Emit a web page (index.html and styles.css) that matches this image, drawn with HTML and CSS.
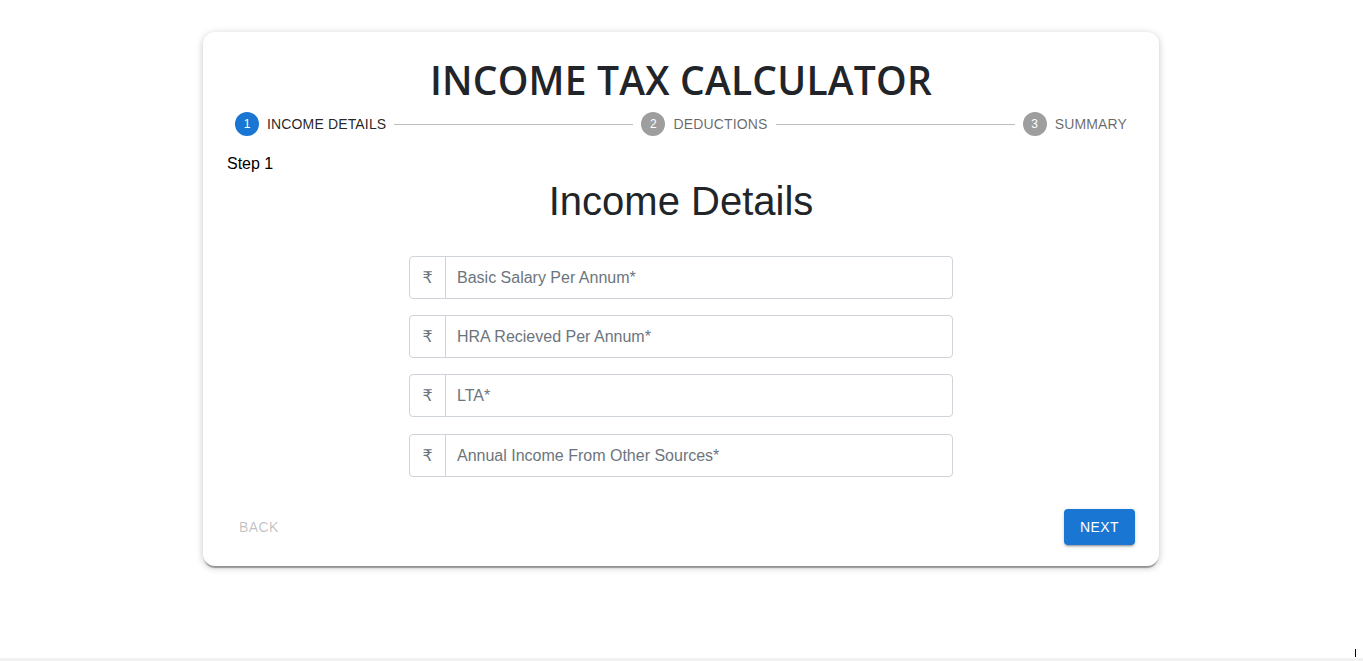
FILE: index.html
```html
<!DOCTYPE html>
<html lang="en">
<head>
    <meta charset="UTF-8">
    <title>Income Tax Calculator</title>
    <link rel="stylesheet" href="styles.css">
</head>
<body>
    <div class="card">
        <h1 class="app-title">INCOME TAX CALCULATOR</h1>

        <div class="stepper">
            <div class="step active">
                <span class="step-icon">1</span>
                <span class="step-label">Income Details</span>
            </div>
            <div class="connector"></div>
            <div class="step">
                <span class="step-icon">2</span>
                <span class="step-label">Deductions</span>
            </div>
            <div class="connector"></div>
            <div class="step">
                <span class="step-icon">3</span>
                <span class="step-label">Summary</span>
            </div>
        </div>

        <div class="step-caption">Step 1</div>
        <h2 class="section-title">Income Details</h2>

        <form class="income-form">
            <div class="input-group">
                <span class="input-prefix">₹</span>
                <input type="text" placeholder="Basic Salary Per Annum*">
            </div>
            <div class="input-group">
                <span class="input-prefix">₹</span>
                <input type="text" placeholder="HRA Recieved Per Annum*">
            </div>
            <div class="input-group">
                <span class="input-prefix">₹</span>
                <input type="text" placeholder="LTA*">
            </div>
            <div class="input-group">
                <span class="input-prefix">₹</span>
                <input type="text" placeholder="Annual Income From Other Sources*">
            </div>
        </form>

        <div class="actions">
            <button class="btn btn-text" disabled>Back</button>
            <button class="btn btn-primary">Next</button>
        </div>
    </div>

    <div class="page-bottom"><span class="caret"></span></div>
</body>
</html>
```

FILE: styles.css
```css
body { margin: 0; font-family: "Liberation Sans", Arial, sans-serif; color: #212529; background: #fff; height: 661px; position: relative; overflow: hidden; }

.card { width: 956px; margin: 32px 0 0 203px; background: #fff; border-radius: 12px; box-sizing: border-box; padding: 22px 24px 21px;
    box-shadow: 0 3px 1px -1px rgba(0,0,0,0.32), 0 2px 6px 0 rgba(0,0,0,0.14), 0 1px 10px 0 rgba(0,0,0,0.1); }

.app-title { margin: 0; text-align: center; font-family: "Open Sans", sans-serif; font-weight: 600; font-size: 39px; line-height: 52px; color: #212529; letter-spacing: 0.2px; }

.stepper { display: flex; align-items: center; padding: 0 8px; margin-top: 6px; height: 24px; }
.step { display: flex; align-items: center; }
.step-icon { width: 24px; height: 24px; border-radius: 50%; background: #9e9e9e; color: #fff; font-size: 12px; display: flex; align-items: center; justify-content: center; }
.step.active .step-icon { background: #1976d2; }
.step-label { margin-left: 8px; font-size: 14px; letter-spacing: 0.15px; text-transform: uppercase; color: rgba(0,0,0,0.6); }
.step.active .step-label { color: rgba(0,0,0,0.87); }
.connector { flex: 1; height: 1px; background: #bdbdbd; margin: 0 8px; }

.step-caption { margin-top: 18px; font-size: 16px; line-height: 20px; color: #000; }
.section-title { margin: 3px 0 0; text-align: center; font-weight: 400; font-size: 40px; line-height: 48px; color: #212529; }

.income-form { width: 544px; margin: 31px auto 0; }
.input-group { display: flex; height: 43px; border: 1px solid #ced4da; border-radius: 4px; box-sizing: border-box; margin-bottom: 16px; }
.input-group:last-child { margin-top: 17px; }
.input-prefix { width: 35px; border-right: 1px solid #ced4da; display: flex; align-items: center; justify-content: center; color: #6c757d; font-size: 16px; font-family: "DejaVu Sans", sans-serif; }
.input-group input { flex: 1; border: none; outline: none; padding: 0 11px; font-size: 16px; font-family: "Liberation Sans", Arial, sans-serif; color: #495057; background: transparent; border-radius: 0 4px 4px 0; }
.input-group input::placeholder { color: #6c757d; }

.actions { display: flex; justify-content: space-between; align-items: center; margin-top: 32px; }
.btn { font-family: "Liberation Sans", Arial, sans-serif; font-size: 14px; text-transform: uppercase; letter-spacing: 0.4px; border: none; border-radius: 4px; height: 36px; padding: 0 16px; }
.btn-text { background: transparent; color: rgba(0,0,0,0.26); padding: 0 12px; }
.btn-primary { background: #1976d2; color: #fff; box-shadow: 0 3px 1px -2px rgba(0,0,0,0.2), 0 2px 2px 0 rgba(0,0,0,0.14), 0 1px 5px 0 rgba(0,0,0,0.12); }

.page-bottom { position: absolute; left: 0; right: 0; bottom: 0; height: 3px; background: #f1f1f1; }
.caret { position: absolute; right: 7px; bottom: 4px; width: 1px; height: 8px; background: #000; }
```
